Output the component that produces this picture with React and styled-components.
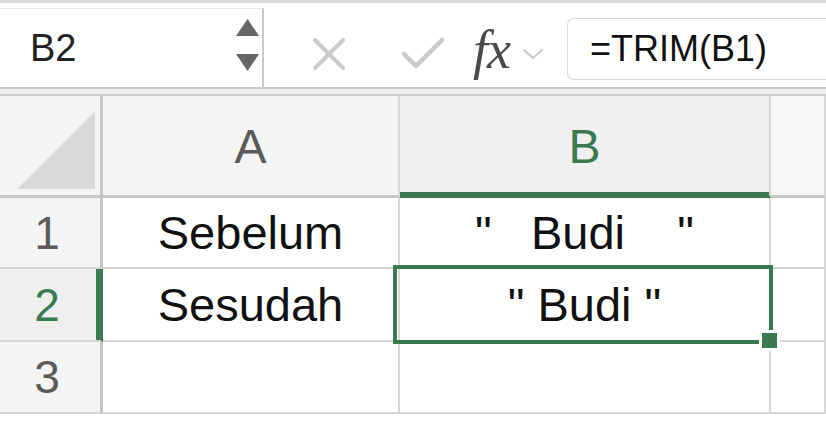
import React from "react";
import styled, { createGlobalStyle } from "styled-components";

const green = "#3b7a50";
const gridLine = "#d7d7d7";
const headLine = "#c6c6c6";

const Global = createGlobalStyle`
  body {
    margin: 0;
    background: #ffffff;
    font-family: "Liberation Sans", Arial, sans-serif;
  }
`;

const Page = styled.div`
  width: 826px;
  height: 424px;
  overflow: hidden;
  background: #ffffff;
`;

const Toolbar = styled.div`
  box-sizing: border-box;
  height: 89px;
  display: flex;
  border-top: 3px solid #dadada;
  border-bottom: 2px solid #c9c9c9;
  padding-top: 5px;
  background: #ffffff;
`;

const NameBox = styled.div`
  box-sizing: border-box;
  width: 264px;
  display: flex;
  align-items: center;
  justify-content: space-between;
  padding: 0 3px 0 30px;
  border-top: 1px solid #e8e8e8;
  border-right: 2px solid #c9c9c9;
  font-size: 38px;
  color: #222;
`;

const Spinner = styled.div`
  display: flex;
  flex-direction: column;
  gap: 18px;
  margin-top: -6px;
`;

const Actions = styled.div`
  display: flex;
  align-items: center;
  padding-top: 12px;
  width: 303px;
`;

const Slot = styled.div`
  display: flex;
  align-items: center;
  margin-left: ${(p) => p.$ml}px;
`;

const Fx = styled.span`
  font-family: "Liberation Serif", "Times New Roman", serif;
  font-style: italic;
  font-size: 54px;
  color: #4a4a4a;
  line-height: 1;
  margin-top: -8px;
  letter-spacing: -1px;
`;

const FormulaBox = styled.div`
  box-sizing: border-box;
  flex: 1;
  height: 62px;
  margin-top: 10px;
  display: flex;
  align-items: center;
  padding-left: 22px;
  border: 1px solid #d9d9d9;
  border-right: none;
  border-radius: 7px 0 0 7px;
  font-size: 36px;
  color: #111;
`;

const Separator = styled.div`
  height: 5px;
  background: #f0f0f0;
  border-bottom: 2px solid #cbcbcb;
`;

const Grid = styled.div`
  display: grid;
  grid-template-columns: 103px 297px 371px 1fr;
  grid-template-rows: 102px 71px 73px 72px;
`;

const Cell = styled.div`
  box-sizing: border-box;
  position: relative;
  display: flex;
  align-items: center;
  justify-content: center;
  border-right: 2px solid ${gridLine};
  border-bottom: 2px solid ${gridLine};
  font-size: 47px;
  color: #111;
  white-space: pre;
  background: #ffffff;
`;

const ColHead = styled(Cell)`
  background: ${(p) => (p.$active ? "#efefef" : p.$dim ? "#f7f7f7" : "#f4f4f4")};
  border-bottom: 3px solid ${(p) => (p.$active ? green : headLine)};
  box-shadow: ${(p) => (p.$active ? `inset 0 -3px 0 ${green}` : "none")};
  color: ${(p) => (p.$active ? green : "#5b5b5b")};
  font-size: 48px;
  padding-top: 2px;
`;

const Corner = styled(Cell)`
  background: #f4f4f4;
  border-right: 3px solid ${headLine};
  border-bottom: 3px solid ${headLine};
  &::after {
    content: "";
    position: absolute;
    left: 17px;
    top: 15px;
    width: 78px;
    height: 78px;
    background: #dadada;
    clip-path: polygon(100% 0, 100% 100%, 0 100%);
  }
`;

const RowHead = styled(Cell)`
  background: ${(p) => (p.$active ? "#efefef" : "#f4f4f4")};
  border-right: 3px solid ${(p) => (p.$active ? green : headLine)};
  box-shadow: ${(p) => (p.$active ? `inset -4px 0 0 ${green}` : "none")};
  color: ${(p) => (p.$active ? green : "#5b5b5b")};
  font-size: 46px;
  padding-right: 6px;
`;

const Selection = styled.div`
  position: absolute;
  top: -4px;
  left: -7px;
  right: -4px;
  bottom: -4px;
  border: 4px solid ${green};
  pointer-events: none;
  z-index: 2;
`;

const Handle = styled.div`
  position: absolute;
  right: -11px;
  bottom: -11px;
  width: 15px;
  height: 15px;
  background: ${green};
  border: 3px solid #ffffff;
  z-index: 3;
`;

function Triangle({ up }) {
  return (
    <svg width="23" height="17" viewBox="0 0 23 17">
      <polygon
        points={up ? "11.5,0 23,17 0,17" : "0,0 23,0 11.5,17"}
        fill="#666666"
      />
    </svg>
  );
}

const rows = [
  { n: "1", a: "Sebelum", b: "\"   Budi    \"" },
  { n: "2", a: "Sesudah", b: "\" Budi \"", active: true },
  { n: "3", a: "", b: "" },
];

export default function App() {
  return (
    <Page>
      <Global />
      <Toolbar>
        <NameBox>
          <span>B2</span>
          <Spinner>
            <Triangle up />
            <Triangle />
          </Spinner>
        </NameBox>
        <Actions>
          <Slot $ml={48}>
            <svg width="34" height="34" viewBox="0 0 34 34">
              <path d="M3 3 L31 31 M31 3 L3 31" stroke="#cbcbcb" strokeWidth="4" strokeLinecap="round" />
            </svg>
          </Slot>
          <Slot $ml={55}>
            <svg width="44" height="34" viewBox="0 0 44 34">
              <path d="M3 17 L15 29 L41 3" stroke="#cbcbcb" strokeWidth="4.5" fill="none" strokeLinecap="round" strokeLinejoin="round" />
            </svg>
          </Slot>
          <Slot $ml={28}>
            <Fx>fx</Fx>
          </Slot>
          <Slot $ml={12}>
            <svg width="22" height="12" viewBox="0 0 22 12">
              <path d="M2 2 L11 10 L20 2" stroke="#c9c9c9" strokeWidth="2" fill="none" strokeLinecap="round" strokeLinejoin="round" />
            </svg>
          </Slot>
        </Actions>
        <FormulaBox>=TRIM(B1)</FormulaBox>
      </Toolbar>
      <Separator />
      <Grid>
        <Corner />
        <ColHead>A</ColHead>
        <ColHead $active>B</ColHead>
        <ColHead $dim />
        {rows.map((r) => (
          <React.Fragment key={r.n}>
            <RowHead $active={r.active}>{r.n}</RowHead>
            <Cell>{r.a}</Cell>
            <Cell>
              {r.b}
              {r.active && (
                <Selection>
                  <Handle />
                </Selection>
              )}
            </Cell>
            <Cell />
          </React.Fragment>
        ))}
      </Grid>
    </Page>
  );
}
